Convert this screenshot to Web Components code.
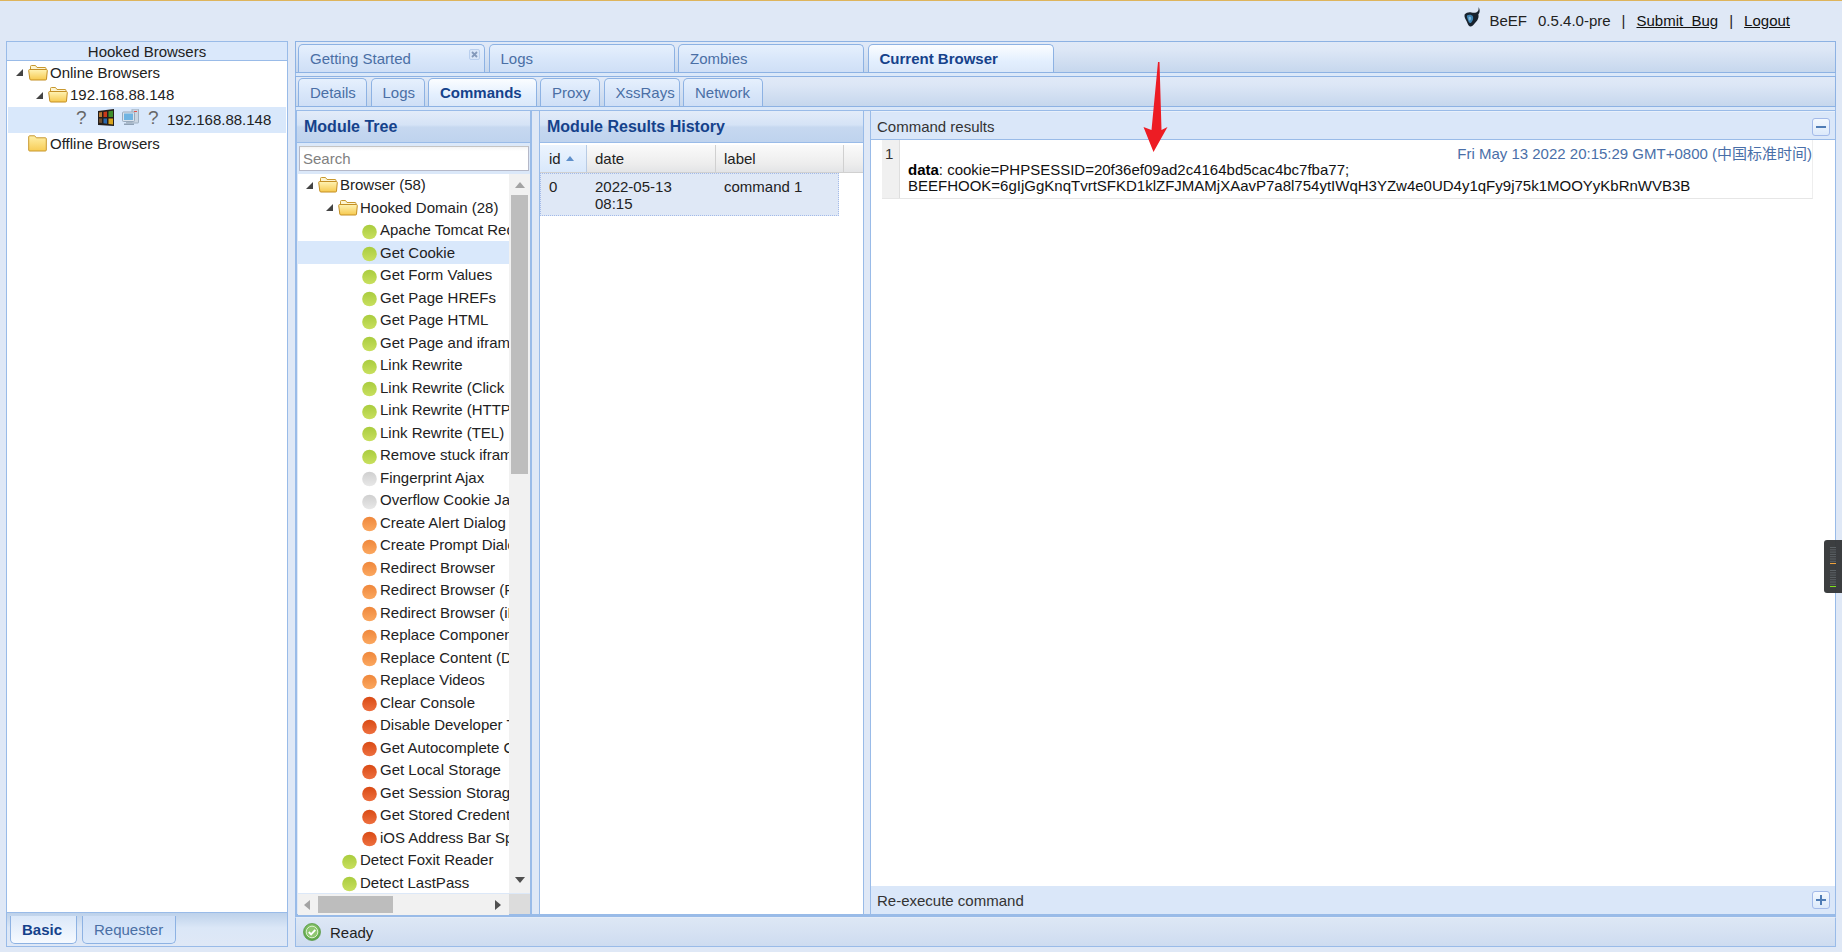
<!DOCTYPE html>
<html>
<head>
<meta charset="utf-8">
<title>BeEF Control Panel</title>
<style>
    html, body { margin: 0; padding: 0; height: 100%; overflow: hidden; background: #dfe8f6; }
    body { font: 15px "Liberation Sans", "Noto Sans CJK SC", sans-serif; color: #222; }
</style>
</head>
<body>
<beef-layout>
    <top-bar slot="top"></top-bar>
    <browsers-panel slot="west">
        <tree-row icon="open"><span>Online Browsers</span></tree-row>
        <tree-row icon="open" level="1"><span>192.168.88.148</span></tree-row>
        <hooked-row>192.168.88.148</hooked-row>
        <tree-row icon="closed" noarrow><span>Offline Browsers</span></tree-row>
    </browsers-panel>
    <main-area slot="main">
        <tab-strip slot="outer">
            <tab-item width="187" closable>Getting Started</tab-item>
            <tab-item width="186">Logs</tab-item>
            <tab-item width="186">Zombies</tab-item>
            <tab-item width="186.5" active>Current Browser</tab-item>
        </tab-strip>
        <tab-strip slot="inner">
            <tab-item width="69">Details</tab-item>
            <tab-item width="54">Logs</tab-item>
            <tab-item width="108.5" active>Commands</tab-item>
            <tab-item width="60">Proxy</tab-item>
            <tab-item width="76">XssRays</tab-item>
            <tab-item width="80">Network</tab-item>
        </tab-strip>
        <module-tree slot="tree"></module-tree>
        <results-panel slot="results"></results-panel>
        <command-panel slot="command"></command-panel>
        <status-bar slot="status">Ready</status-bar>
    </main-area>
</beef-layout>
<red-arrow></red-arrow>
<side-meter></side-meter>

<script>
const FONT = '"Liberation Sans", "Noto Sans CJK SC", sans-serif';

const ICONS = {
    open: `<svg width="20" height="17" viewBox="0 0 20 17">
        <defs><linearGradient id="f" x1="0" y1="0" x2="0" y2="1"><stop offset="0" stop-color="#fff3b4"/><stop offset="1" stop-color="#f6c94e"/></linearGradient></defs>
        <path d="M2.5 14V2.5q0-1 1-1h4l1.5 2h8q1 0 1 1V14z" fill="#fdf4cf" stroke="#c8982f"/>
        <path d="M.7 6.5q0-1 1-1h16.6q1 0 1 1l-.8 8.5q0 1-1 1H3q-1 0-1.2-1z" fill="url(#f)" stroke="#c48f25"/>
    </svg>`,
    closed: `<svg width="19" height="17" viewBox="0 0 19 17">
        <defs><linearGradient id="f" x1="0" y1="0" x2="0" y2="1"><stop offset="0" stop-color="#fff0a8"/><stop offset="1" stop-color="#f7cc55"/></linearGradient></defs>
        <path d="M.7 15V1.8q0-1 1-1h5l1.6 2h9q1 0 1 1V15q0 1-1 1H1.7q-1 0-1-1z" fill="url(#f)" stroke="#c8982f"/>
    </svg>`,
    arrow: `<svg width="7" height="7" viewBox="0 0 7 7"><path d="M7 0v7H0z" fill="#444"/></svg>`,
    windows: `<svg width="16" height="17" viewBox="0 0 16 17">
        <path d="M0 2l16-2v17L0 16z" fill="#241e1b"/>
        <path d="M1 3.500l3-.4V8H1z" fill="#b87a34"/><path d="M1 9.500h3V14l-3-.3z" fill="#6d4e2e"/>
        <path d="M5.500 3l3.500-.5V8H5.500z" fill="#c93a1b"/><path d="M10.500 2.300L15 1.700V8h-4.500z" fill="#3f8e2a"/>
        <path d="M5.500 9.500H9v5.200l-3.500-.4z" fill="#2a68ae"/><path d="M10.500 9.500H15v6l-4.500-.6z" fill="#d8a41c"/>
    </svg>`,
    monitor: `<svg width="17" height="17" viewBox="0 0 17 17">
        <rect x="10" y="0" width="6.5" height="14" rx=".5" fill="#cbd6e2" stroke="#9fb0c2"/>
        <rect x="12" y="2" width="3" height="1" fill="#e2534a"/>
        <rect x=".5" y="3" width="12" height="9.5" rx="1" fill="#dbe3ec" stroke="#98aabd"/>
        <rect x="2" y="4.5" width="9" height="6.5" fill="#6fb4e2"/>
        <rect x="4" y="13" width="6" height="1.5" fill="#a8b7c7"/>
        <rect x="2" y="14.5" width="10" height="1.5" fill="#8fa1b5"/>
    </svg>`,
    bull: `<svg width="17" height="21" viewBox="0 0 17 21">
        <path d="M14.500 0c1.800 2.800 1.500 5.500-.2 7.500.9 2.500-.5 6.300-3.300 8.500-1.300 1.800-3.500 4-5 3.500-1.700-.5-2.400-3-3.500-5.500C1.500 12 0 10 .6 7.500 2.500 5.500 4.800 5 7.500 5.500c2.500.5 4.800.5 6.300-1.200.8-1 1-2.700.7-4.300z" fill="#18222d"/>
        <path d="M3 8.500c2-1.200 4.800-.8 5.800.8.9 1.800.2 4.700-1.500 6.200C6 16.800 4.800 15.500 4.300 14 3.700 12 2.500 10 3 8.500z" fill="#3f83b2"/>
        <path d="M4.800 10c1-.4 2.300 0 2.300 1.200s-.8 2.500-1.700 2.300-1-3-.6-3.500z" fill="#7fb8da"/>
    </svg>`,
    ok: `<svg width="18" height="18" viewBox="0 0 18 18">
        <defs><radialGradient id="g" cx=".5" cy=".4" r=".65"><stop offset="0" stop-color="#b4e08e"/><stop offset="1" stop-color="#4b9c3a"/></radialGradient></defs>
        <circle cx="9" cy="9" r="8.500" fill="url(#g)" stroke="#5d9a4a" stroke-width=".8"/>
        <circle cx="9" cy="9" r="5.800" fill="#8ec66f" stroke="#dcefd0" stroke-width="1"/>
        <path d="M5.800 9l2.300 2.400 4.200-4.600" fill="none" stroke="#fff" stroke-width="1.900"/>
    </svg>`
};

const BALLS = {
    green: ['#c9e05f', '#a9cc3e'],
    grey: ['#e8e8e8', '#cfcfcf'],
    orange: ['#fba860', '#ef873b'],
    red: ['#ee7040', '#d94a14']
};

function ball(color) {
    const c = BALLS[color];
    return `<svg width="15" height="16" viewBox="0 0 15 16">
        <defs><linearGradient id="b" x1="0" y1="0" x2="0" y2="1"><stop offset="0" stop-color="${c[1]}"/><stop offset="1" stop-color="${c[0]}"/></linearGradient></defs>
        <circle cx="7.500" cy="8" r="7.300" fill="url(#b)"/>
    </svg>`;
}

// Page frame: header row, west column, main column
class BeefLayout extends HTMLElement {
    constructor() {
        super();
        this.attachShadow({ mode: 'open' });
        this.shadowRoot.innerHTML = `
            <style>
                :host {
                    display: grid;
                    box-sizing: border-box;
                    width: 1842px;
                    height: 952px;
                    grid-template-columns: 282px 1541px;
                    grid-template-rows: 40px 906px;
                    column-gap: 7px;
                    padding: 0 6px 5px;
                    border-top: 1px solid #deb45c;
                }
                .top { grid-column: 1 / 3; display: block; }
            </style>
            <slot name="top" class="top"></slot>
            <slot name="west"></slot>
            <slot name="main"></slot>
        `;
    }
}

class TopBar extends HTMLElement {
    constructor() {
        super();
        this.attachShadow({ mode: 'open' });
        this.shadowRoot.innerHTML = `
            <style>
                :host {
                    display: flex;
                    align-items: center;
                    justify-content: flex-end;
                    height: 40px;
                    padding: 0 46px 2px 0;
                    box-sizing: border-box;
                    font: 15px ${FONT};
                    color: #222;
                }
                svg { margin: -5px 9px 0 0; display: block; }
                span { margin-left: 11px; }
                span:first-of-type { margin-left: 0; }
                a { color: #111; text-decoration: underline; margin-left: 11px; white-space: pre; }
            </style>
            ${ICONS.bull}
            <span>BeEF</span>
            <span>0.5.4.0-pre</span>
            <span>|</span>
            <a>Submit&nbsp;&nbsp;Bug</a>
            <span>|</span>
            <a>Logout</a>
        `;
    }
}

class BrowsersPanel extends HTMLElement {
    constructor() {
        super();
        this.attachShadow({ mode: 'open' });
        this.shadowRoot.innerHTML = `
            <style>
                :host {
                    display: flex;
                    flex-direction: column;
                    box-sizing: border-box;
                    height: 906px;
                    border: 1px solid #99bbe8;
                    font: 15px ${FONT};
                }
                .title {
                    height: 18px;
                    line-height: 19px;
                    text-align: center;
                    color: #222;
                    background: #dae8fb;
                    border-bottom: 1px solid #99bbe8;
                    flex: none;
                }
                .body { flex: 1; background: #fff; padding-left: 1px; padding-right: 1px; }
                .bottom {
                    display: flex;
                    gap: 5px;
                    box-sizing: border-box;
                    height: 34px;
                    flex: none;
                    padding: 3px 0 0 3px;
                    border-top: 1px solid #99bbe8;
                    background: linear-gradient(#bdd1ea, #dbe7f7 45%, #dfe8f6);
                }
            </style>
            <div class="title">Hooked Browsers</div>
            <div class="body"><slot></slot></div>
            <div class="bottom">
                <tab-item bottom active width="67">Basic</tab-item>
                <tab-item bottom width="94">Requester</tab-item>
            </div>
        `;
    }
}

// One line of a tree: arrow, icon, label
class TreeRow extends HTMLElement {
    constructor() {
        super();
        this.attachShadow({ mode: 'open' });
    }

    connectedCallback() {
        const level = parseInt(this.getAttribute('level') || '0');
        const icon = this.getAttribute('icon');
        const color = this.getAttribute('ball');
        const hasArrow = icon === 'open' && !this.hasAttribute('noarrow');
        this.shadowRoot.innerHTML = `
            <style>
                :host {
                    display: flex;
                    align-items: center;
                    height: 22.5px;
                    padding-left: ${level * 20 + 8}px;
                    font: 15px ${FONT};
                    color: #222;
                    white-space: nowrap;
                    overflow: hidden;
                }
                :host([selected]) { background: #d9e8fb; }
                .arrow { width: 12px; flex: none; display: flex; align-items: center; padding-top: 1px; }
                .icon { width: 22px; flex: none; display: flex; align-items: center; }
                .ball { margin: 4px 0 0 4px; display: flex; }
                svg { display: block; flex: none; }
            </style>
            <div class="arrow">${hasArrow ? ICONS.arrow : ''}</div>
            <div class="icon">${color ? `<div class="ball">${ball(color)}</div>` : ICONS[icon]}</div>
            <slot></slot>
        `;
    }
}

// The hooked browser line, with its browser and OS icons
class HookedRow extends HTMLElement {
    constructor() {
        super();
        this.attachShadow({ mode: 'open' });
        this.shadowRoot.innerHTML = `
            <style>
                :host {
                    display: flex;
                    align-items: center;
                    height: 26px;
                    margin-top: .5px;
                    padding-left: 68px;
                    background: #d9e8fb;
                    font: 15px ${FONT};
                    color: #222;
                }
                .q { font-size: 19px; color: #666; width: 12px; margin-top: -3px; text-align: left; }
                svg { display: block; flex: none; margin-top: -4px; }
                .win { margin-left: 10px; }
                .mon { margin-left: 8px; margin-right: 9px; }
                .ip { margin-left: 7px; }
            </style>
            <span class="q">?</span>
            <span class="win">${ICONS.windows}</span>
            <span class="mon">${ICONS.monitor}</span>
            <span class="q">?</span>
            <span class="ip"><slot></slot></span>
        `;
    }
}

class TabStrip extends HTMLElement {
    constructor() {
        super();
        this.attachShadow({ mode: 'open' });
        this.shadowRoot.innerHTML = `
            <style>
                :host {
                    display: flex;
                    align-items: flex-end;
                    gap: 3.500px;
                    box-sizing: border-box;
                    padding: 0 2px;
                    border: 1px solid #8db2e3;
                    background: linear-gradient(#e0e9f7, #dde7f6 25%, #c6d7ed);
                }
            </style>
            <slot></slot>
        `;
    }
}

class TabItem extends HTMLElement {
    constructor() {
        super();
        this.attachShadow({ mode: 'open' });
    }

    connectedCallback() {
        const width = this.getAttribute('width');
        const closable = this.hasAttribute('closable');
        this.shadowRoot.innerHTML = `
            <style>
                :host {
                    display: block;
                    position: relative;
                    box-sizing: border-box;
                    height: 28px;
                    ${width ? `width: ${width}px;` : ''}
                    flex: none;
                    padding: 0 11px;
                    border: 1px solid #8db2e3;
                    border-bottom: 0;
                    border-radius: 5px 5px 0 0;
                    font: 15px/27px ${FONT};
                    color: #4a6fa5;
                    background: linear-gradient(#e6f0fd, #d9e7fa 50%, #cfdff6);
                }
                :host([active]) {
                    color: #15428b;
                    font-weight: bold;
                    background: linear-gradient(#fbfdff, #e3effe 60%, #dbe8f9);
                }
                :host([bottom]) {
                    border: 1px solid #8db2e3;
                    border-top: 0;
                    border-radius: 0 0 5px 5px;
                    height: 28px;
                    background: linear-gradient(#cfdff6, #dbe9fb);
                }
                :host([bottom][active]) { background: linear-gradient(#dbe8f9, #f6faff); }
                .close {
                    position: absolute;
                    top: 4px;
                    right: 4px;
                    width: 9px;
                    height: 9px;
                    border: 1px solid #b9cfee;
                    border-radius: 2px;
                    background: #d9e6f8;
                }
                .close svg { display: block; }
            </style>
            <slot></slot>
            ${closable ? `<div class="close"><svg width="9" height="9" viewBox="0 0 9 9"><path d="M2 2l5 5M7 2l-5 5" stroke="#8499ba" stroke-width="1.800"/></svg></div>` : ''}
        `;
    }
}

// Tabs on top, the three columns, status bar
class MainArea extends HTMLElement {
    constructor() {
        super();
        this.attachShadow({ mode: 'open' });
        this.shadowRoot.innerHTML = `
            <style>
                :host {
                    display: flex;
                    flex-direction: column;
                    height: 906px;
                    font: 15px ${FONT};
                }
                ::slotted(tab-strip) { flex: none; }
                ::slotted([slot=outer]) { height: 32px; }
                ::slotted([slot=inner]) { height: 31px; }
                .band { height: 3px; flex: none; background: #dbe8f9; border: solid #99bbe8; border-width: 0 1px; }
                .band.low { height: 4px; background: linear-gradient(#dbe8f9 70%, #99bbe8 70%); }
                .columns {
                    flex: 1;
                    display: grid;
                    grid-template-columns: 236px 324px 965px;
                    column-gap: 7px;
                    min-height: 0;
                    background: #dfe8f6;
                    border: solid #99bbe8;
                    border-width: 0 1px 3px;
                    justify-content: start;
                }
                .columns ::slotted([slot=results]) { margin-right: -1px; }
            </style>
            <slot name="outer"></slot>
            <div class="band"></div>
            <slot name="inner"></slot>
            <div class="band low"></div>
            <div class="columns">
                <slot name="tree"></slot>
                <slot name="results"></slot>
                <slot name="command"></slot>
            </div>
            <slot name="status"></slot>
        `;
    }
}

class PanelTitle extends HTMLElement {
    constructor() {
        super();
        this.attachShadow({ mode: 'open' });
        this.shadowRoot.innerHTML = `
            <style>
                :host {
                    display: block;
                    box-sizing: border-box;
                    height: 32px;
                    flex: none;
                    padding: 0 0 0 7px;
                    font: bold 16px/31px ${FONT};
                    color: #15428b;
                    border-bottom: 1px solid #99bbe8;
                    background: linear-gradient(#e3ecf9, #d5e3f6 45%, #c6d8f0 52%, #bfd3ee);
                }
            </style>
            <slot></slot>
        `;
    }
}

// Static scrollbar drawing
class ScrollBar extends HTMLElement {
    constructor() {
        super();
        this.attachShadow({ mode: 'open' });
    }

    connectedCallback() {
        const horizontal = this.getAttribute('orient') === 'h';
        this.shadowRoot.innerHTML = horizontal ? `
            <style>
                :host { display: flex; align-items: center; flex: 1; height: 21px; background: #f1f1f1; }
                .start { width: 0; height: 0; margin-left: 6px; border: 5px solid transparent; border-left: 0; border-right: 6px solid #a3a3a3; }
                .thumb { width: 75px; height: 17px; margin-left: 8px; background: #bdbdbd; }
                .end { width: 0; height: 0; margin-left: 102px; border: 5px solid transparent; border-right: 0; border-left: 6px solid #505050; }
            </style>
            <div class="start"></div><div class="thumb"></div><div class="end"></div>
        ` : `
            <style>
                :host { display: flex; flex-direction: column; align-items: center; width: 21px; flex: none; background: #f1f1f1; }
                .up { width: 0; height: 0; margin-top: 8px; border: 5px solid transparent; border-top: 0; border-bottom: 6px solid #a3a3a3; }
                .thumb { width: 17px; height: 279px; margin-top: 7px; background: #bdbdbd; }
                .down { width: 0; height: 0; margin-top: 403px; border: 5px solid transparent; border-bottom: 0; border-top: 6px solid #505050; }
            </style>
            <div class="up"></div><div class="thumb"></div><div class="down"></div>
        `;
    }
}

const MODULES = [
    [0, 'Browser (58)', 'open'],
    [1, 'Hooked Domain (28)', 'open'],
    [2, 'Apache Tomcat Request', 'green'],
    [2, 'Get Cookie', 'green', true],
    [2, 'Get Form Values', 'green'],
    [2, 'Get Page HREFs', 'green'],
    [2, 'Get Page HTML', 'green'],
    [2, 'Get Page and iframe HTML', 'green'],
    [2, 'Link Rewrite', 'green'],
    [2, 'Link Rewrite (Click Events)', 'green'],
    [2, 'Link Rewrite (HTTPS)', 'green'],
    [2, 'Link Rewrite (TEL)', 'green'],
    [2, 'Remove stuck iframes', 'green'],
    [2, 'Fingerprint Ajax', 'grey'],
    [2, 'Overflow Cookie Jar', 'grey'],
    [2, 'Create Alert Dialog', 'orange'],
    [2, 'Create Prompt Dialog', 'orange'],
    [2, 'Redirect Browser', 'orange'],
    [2, 'Redirect Browser (Rickroll)', 'orange'],
    [2, 'Redirect Browser (iFrame)', 'orange'],
    [2, 'Replace Component (Deface)', 'orange'],
    [2, 'Replace Content (Deface)', 'orange'],
    [2, 'Replace Videos', 'orange'],
    [2, 'Clear Console', 'red'],
    [2, 'Disable Developer Tools', 'red'],
    [2, 'Get Autocomplete Creds', 'red'],
    [2, 'Get Local Storage', 'red'],
    [2, 'Get Session Storage', 'red'],
    [2, 'Get Stored Credentials', 'red'],
    [2, 'iOS Address Bar Spoofing', 'red'],
    [1, 'Detect Foxit Reader', 'green'],
    [1, 'Detect LastPass', 'green']
];

class ModuleTree extends HTMLElement {
    constructor() {
        super();
        this.attachShadow({ mode: 'open' });
        const rows = MODULES.map(([level, name, kind, selected]) => {
            const look = kind === 'open' ? 'icon="open"' : `ball="${kind}"`;
            return `<tree-row level="${level}" ${look} ${selected ? 'selected' : ''}>${name}</tree-row>`;
        }).join('');
        this.shadowRoot.innerHTML = `
            <style>
                :host {
                    display: flex;
                    flex-direction: column;
                    box-sizing: border-box;
                    height: 803px;
                    border-right: 2px solid #99bbe8;
                    border-left: 1px solid #99bbe8;
                    font: 15px ${FONT};
                }
                .search { height: 30.5px; box-sizing: border-box; flex: none; padding: 3px 1px 0 2px; background: #dbe8f9; }
                input {
                    display: block;
                    box-sizing: border-box;
                    width: 100%;
                    height: 25px;
                    margin: 0;
                    padding: 0 3px;
                    border: 1px solid #b5b8c8;
                    border-top-color: #c4c4c4;
                    background: linear-gradient(#f4f4f4, #fff 4px);
                    font: 15px ${FONT};
                    outline: none;
                }
                input::placeholder { color: #808080; opacity: 1; }
                .body { flex: 1; min-height: 0; display: flex; flex-direction: column; margin-left: 1px; background: #fff; }
                .list { flex: 1; min-height: 0; display: flex; }
                .rows { flex: 1; min-width: 0; overflow: hidden; }
                .bottom { display: flex; flex: none; height: 21px; border-top: 1px solid #dce8f8; box-sizing: border-box; }
                .corner { width: 21px; flex: none; background: #dcdcdc; }
            </style>
            <panel-title>Module Tree</panel-title>
            <div class="search"><input type="text" placeholder="Search" autocomplete="off"></div>
            <div class="body">
                <div class="list">
                    <div class="rows">${rows}</div>
                    <scroll-bar></scroll-bar>
                </div>
                <div class="bottom">
                    <scroll-bar orient="h"></scroll-bar>
                    <div class="corner"></div>
                </div>
            </div>
        `;
    }
}

class ResultsPanel extends HTMLElement {
    constructor() {
        super();
        this.attachShadow({ mode: 'open' });
        this.shadowRoot.innerHTML = `
            <style>
                :host {
                    display: flex;
                    flex-direction: column;
                    box-sizing: border-box;
                    height: 803px;
                    border: solid #99bbe8;
                    border-width: 0 1px;
                    background: #fff;
                    font: 15px ${FONT};
                    color: #222;
                }
                .head {
                    display: grid;
                    grid-template-columns: 47px 129px 128px 1fr;
                    flex: none;
                    box-sizing: border-box;
                    height: 28px;
                    margin-top: 2px;
                    border-bottom: 1px solid #d0d0d0;
                    background: linear-gradient(#fafafa, #ededed 70%, #e3e4e6);
                }
                .head div {
                    display: flex;
                    align-items: center;
                    gap: 5px;
                    padding-left: 8px;
                    border-right: 1px solid #d0d0d0;
                }
                .head .sorted { padding-left: 9px; background: linear-gradient(#ecf4fe, #d9e8fb); border-right-color: #b8cbe4; }
                .head .filler { border-right: 0; padding: 0; }
                .sort { width: 0; height: 0; border: 4px solid transparent; border-top: 0; border-bottom: 5px solid #5f8fca; }
                .row {
                    display: grid;
                    grid-template-columns: 47px 129px 123px;
                    width: 299px;
                    box-sizing: border-box;
                    background: #dfe8f6;
                    border: 1px dotted #a3bae9;
                    height: 43px;
                    line-height: 17.500px;
                    padding-top: 3.5px;
                }
                .row div { padding-left: 7px; }
                .row div:first-child { padding-left: 8px; }
            </style>
            <panel-title>Module Results History</panel-title>
            <div class="head">
                <div class="sorted">id<span class="sort"></span></div>
                <div>date</div>
                <div>label</div>
                <div class="filler"></div>
            </div>
            <div class="row">
                <div>0</div>
                <div>2022-05-13<br>08:15</div>
                <div>command 1</div>
            </div>
        `;
    }
}

class ToolButton extends HTMLElement {
    constructor() {
        super();
        this.attachShadow({ mode: 'open' });
    }

    connectedCallback() {
        const plus = this.getAttribute('kind') === 'plus';
        this.shadowRoot.innerHTML = `
            <style>
                :host {
                    display: flex;
                    align-items: center;
                    justify-content: center;
                    box-sizing: border-box;
                    width: 18px;
                    height: 18px;
                    flex: none;
                    border: 1px solid #a3bae9;
                    border-radius: 3px;
                    background: linear-gradient(#f3f8fe, #dce9fa);
                }
                svg { display: block; }
            </style>
            <svg width="10" height="10" viewBox="0 0 10 10">
                <rect x="0" y="4" width="10" height="2" fill="#4f7cb5"/>
                ${plus ? '<rect x="4" y="0" width="2" height="10" fill="#4f7cb5"/>' : ''}
            </svg>
        `;
    }
}

class CommandPanel extends HTMLElement {
    constructor() {
        super();
        this.attachShadow({ mode: 'open' });
        this.shadowRoot.innerHTML = `
            <style>
                :host {
                    display: flex;
                    flex-direction: column;
                    box-sizing: border-box;
                    height: 803px;
                    border-left: 1px solid #99bbe8;
                    background: #fff;
                    font: 15px ${FONT};
                    color: #222;
                }
                .bar {
                    display: flex;
                    align-items: center;
                    justify-content: space-between;
                    box-sizing: border-box;
                    flex: none;
                    padding: 0 5px 0 6px;
                    background: #dae7f9;
                    color: #333;
                }
                .top { height: 29px; padding-top: 2px; border-bottom: 1px solid #99bbe8; border-top: 1px solid #e8f0fb; }
                .low { height: 28px; }
                .body { flex: 1; min-height: 0; }
                .item {
                    display: flex;
                    height: 59px;
                    box-sizing: border-box;
                    margin: 0 22px 0 11px;
                    border-bottom: 1px solid #e6e6e6;
                    border-right: 1px solid #eee;
                    color: #111;
                }
                .gutter {
                    width: 18px;
                    flex: none;
                    box-sizing: border-box;
                    padding: 5px 0 0 3px;
                    line-height: 18px;
                    background: #f0f0f0;
                    border-right: 1px solid #dedede;
                    color: #333;
                }
                .text { flex: 1; padding-left: 8px; line-height: 16px; }
                .when { text-align: right; padding: 5px 0 0; height: 17px; line-height: 17px; color: #4a6fa8; }
                b { color: #000; }
            </style>
            <div class="bar top"><span>Command results</span><tool-button></tool-button></div>
            <div class="body">
                <div class="item">
                    <div class="gutter">1</div>
                    <div class="text">
                        <div class="when">Fri May 13 2022 20:15:29 GMT+0800 (中国标准时间)</div>
                        <div><b>data</b>: cookie=PHPSESSID=20f36ef09ad2c4164bd5cac4bc7fba77;<br>BEEFHOOK=6gIjGgKnqTvrtSFKD1klZFJMAMjXAavP7a8l754ytIWqH3YZw4e0UD4y1qFy9j75k1MOOYyKbRnWVB3B</div>
                    </div>
                </div>
            </div>
            <div class="bar low"><span>Re-execute command</span><tool-button kind="plus"></tool-button></div>
        `;
    }
}

class StatusBar extends HTMLElement {
    constructor() {
        super();
        this.attachShadow({ mode: 'open' });
        this.shadowRoot.innerHTML = `
            <style>
                :host {
                    display: flex;
                    align-items: center;
                    gap: 9px;
                    box-sizing: border-box;
                    height: 30px;
                    flex: none;
                    padding: 0 0 0 7px;
                    border: 1px solid #99bbe8;
                    border-top: 1px solid #e4ecf8;
                    background: linear-gradient(#dde7f5, #cedcf0);
                    font: 15px ${FONT};
                    color: #222;
                }
                svg { display: block; }
            </style>
            ${ICONS.ok}
            <slot></slot>
        `;
    }
}

// Annotation drawn on top of the screenshot
class RedArrow extends HTMLElement {
    constructor() {
        super();
        this.attachShadow({ mode: 'open' });
        this.shadowRoot.innerHTML = `
            <style>
                :host { position: fixed; left: 1140px; top: 60px; width: 30px; height: 95px; pointer-events: none; }
                svg { display: block; }
            </style>
            <svg width="30" height="95" viewBox="0 0 30 95">
                <path d="M18 2h1.500l2 68 6-3-14 25-10-25 8 3z" fill="#ed1c24"/>
            </svg>
        `;
    }
}

// Browser extension handle sticking in from the right edge
class SideMeter extends HTMLElement {
    constructor() {
        super();
        this.attachShadow({ mode: 'open' });
        const ticks = (end, color) => {
            let out = '';
            for (let i = 0; i < 8; i++) {
                out += `<rect x="6" y="${end - 16 + i * 2.300}" width="6" height="1" fill="#5c6266"/>`;
            }
            return out + `<rect x="6" y="${end}" width="6" height="1" fill="${color}"/>`;
        };
        this.shadowRoot.innerHTML = `
            <style>
                :host {
                    position: fixed;
                    right: 0;
                    top: 540px;
                    width: 18px;
                    height: 53px;
                    border-radius: 3px 0 0 3px;
                    background: rgba(52, 54, 56, 0.96);
                }
                svg { display: block; }
            </style>
            <svg width="18" height="53" viewBox="0 0 18 53">
                ${ticks(23, '#f0a23c')}
                ${ticks(46, '#7fe01c')}
            </svg>
        `;
    }
}

customElements.define('beef-layout', BeefLayout);
customElements.define('top-bar', TopBar);
customElements.define('browsers-panel', BrowsersPanel);
customElements.define('tree-row', TreeRow);
customElements.define('hooked-row', HookedRow);
customElements.define('tab-strip', TabStrip);
customElements.define('tab-item', TabItem);
customElements.define('main-area', MainArea);
customElements.define('panel-title', PanelTitle);
customElements.define('scroll-bar', ScrollBar);
customElements.define('module-tree', ModuleTree);
customElements.define('results-panel', ResultsPanel);
customElements.define('tool-button', ToolButton);
customElements.define('command-panel', CommandPanel);
customElements.define('status-bar', StatusBar);
customElements.define('red-arrow', RedArrow);
customElements.define('side-meter', SideMeter);
</script>
</body>
</html>
